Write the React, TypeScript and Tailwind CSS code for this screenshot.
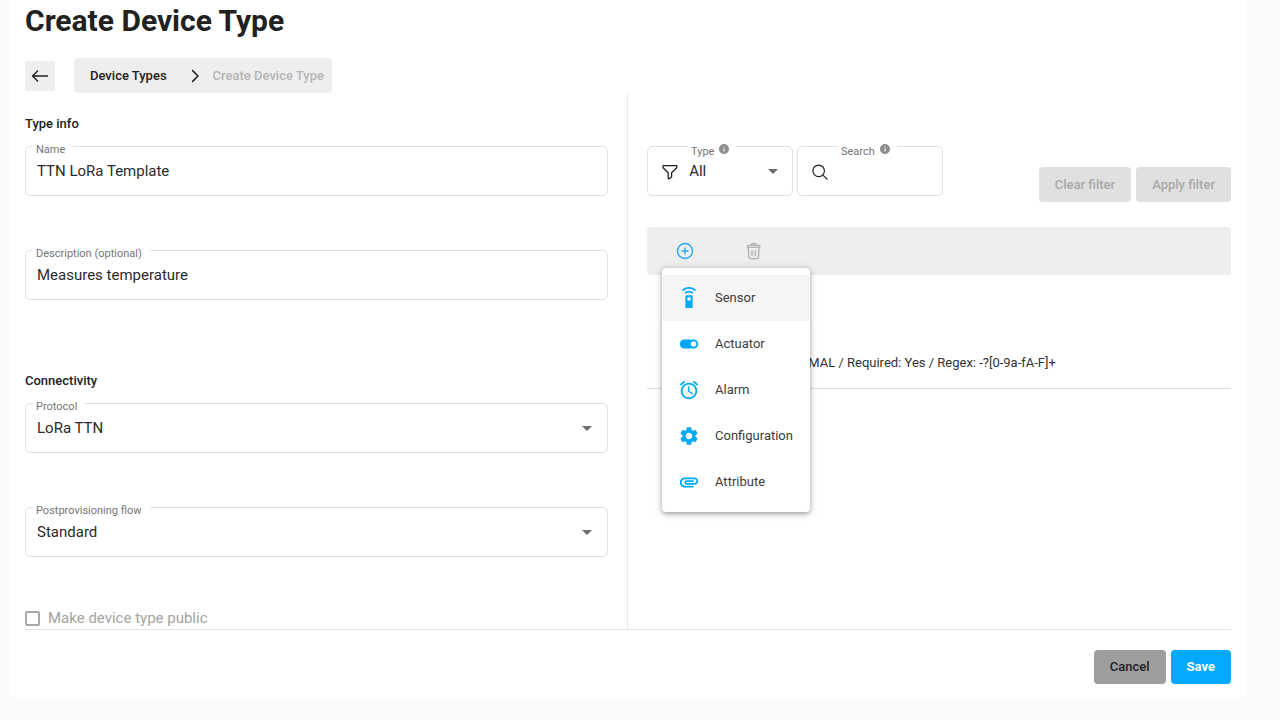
import { useState } from "react";
import type { ReactNode } from "react";
import {
  MdAlarm,
  MdArrowDropDown,
  MdAttachment,
  MdInfo,
  MdSettings,
  MdSettingsRemote,
  MdToggleOn,
} from "react-icons/md";

type FieldProps = {
  id: string;
  label: string;
  children: ReactNode;
};

const Field = ({ id, label, children }: FieldProps) => (
  <div className="relative h-[50px] rounded-[5px] border border-[#e0e0e0]">
    {children}
    <label
      htmlFor={id}
      className="absolute -top-1.5 left-1.5 bg-white pl-1 pr-2 text-[11px] leading-[18px] text-[#757575]"
    >
      {label}
    </label>
  </div>
);

type SelectFieldProps = {
  id: string;
  label: string;
  options: string[];
};

const SelectField = ({ id, label, options }: SelectFieldProps) => (
  <Field id={id} label={label}>
    <select
      id={id}
      className="h-full w-full appearance-none bg-transparent px-[11px] text-[15px] text-[#2b2b2b] outline-none"
    >
      {options.map((option) => (
        <option key={option}>{option}</option>
      ))}
    </select>
    <MdArrowDropDown
      size={24}
      className="pointer-events-none absolute right-2 top-3 text-[#6b6b6b]"
    />
  </Field>
);

type TextFieldProps = {
  id: string;
  label: string;
  value: string;
};

const TextField = ({ id, label, value }: TextFieldProps) => (
  <Field id={id} label={label}>
    <input
      id={id}
      type="text"
      defaultValue={value}
      className="h-full w-full bg-transparent px-[11px] text-[15px] text-[#2b2b2b] outline-none"
    />
  </Field>
);

type FilterFieldProps = {
  id: string;
  label: string;
  icon: ReactNode;
  children: ReactNode;
};

const FilterField = ({ id, label, icon, children }: FilterFieldProps) => (
  <div className="relative flex h-[50px] w-[146px] items-center rounded-[5px] border border-[#e0e0e0] pl-[13px]">
    {icon}
    {children}
    <label
      htmlFor={id}
      className="absolute -top-1 left-10 flex items-start gap-1 bg-white pl-[3px] pr-1.5 text-[11px] leading-[18px] text-[#757575]"
    >
      {label}
      <MdInfo size={12} className="text-[#8e8e8e]" />
    </label>
  </div>
);

const menuItems = [
  { label: "Sensor", Icon: MdSettingsRemote },
  { label: "Actuator", Icon: MdToggleOn },
  { label: "Alarm", Icon: MdAlarm },
  { label: "Configuration", Icon: MdSettings },
  { label: "Attribute", Icon: MdAttachment },
];

const AddMenu = () => (
  <ul
    role="menu"
    className="absolute left-[15px] top-[41px] z-10 w-[148px] rounded bg-white py-[7px] shadow-[0_2px_4px_rgba(0,0,0,0.28),0_1px_8px_rgba(0,0,0,0.16)]"
  >
    {menuItems.map(({ label, Icon }, index) => (
      <li key={label} role="none">
        <button
          type="button"
          role="menuitem"
          className={
            index === 0
              ? "flex h-[46px] w-full items-center gap-[15px] bg-[#f5f5f5] pl-4 text-[13px] text-[#3c3c3c]"
              : "flex h-[46px] w-full items-center gap-[15px] pl-4 text-[13px] text-[#3c3c3c]"
          }
        >
          <Icon size={22} className="shrink-0 text-[#03a9f4]" />
          {label}
        </button>
      </li>
    ))}
  </ul>
);

const FilterIcon = () => (
  <svg width="20" height="20" viewBox="0 0 20 20" fill="none" stroke="#1f1f1f" strokeWidth="1.5" strokeLinejoin="round">
    <path d="M2.4 3.8h16v2.4l-6 5.8v4.8L10 19H8.4v-7l-6-5.8z" />
  </svg>
);

const SearchIcon = () => (
  <svg width="20" height="20" viewBox="0 0 20 20" fill="none" stroke="#1f1f1f" strokeWidth="1.4" strokeLinecap="round">
    <circle cx="9" cy="9.8" r="6.8" />
    <path d="M14 14.8l4.8 4.6" />
  </svg>
);

const App = () => {
  const [isPublic, setIsPublic] = useState(false);

  return (
    <div className="min-h-screen bg-[#fafafa] font-[Roboto,sans-serif] text-[#212121]">
      <main className="ml-2.5 mr-[34px] rounded-b-lg bg-white px-[15px] pb-[15px]">
        <h1 className="text-[30px] font-bold leading-[42px]">
          Create Device Type
        </h1>

        <div className="flex items-center gap-[19px] pt-4">
          <button
            type="button"
            aria-label="Back"
            className="flex h-[30px] w-[30px] items-center justify-center rounded bg-[#eeeeee]"
          >
            <svg width="18" height="18" viewBox="0 0 18 18" fill="none" stroke="#212121" strokeWidth="1.4" strokeLinecap="round" strokeLinejoin="round">
              <path d="M16.5 9H1.5M6.6 3.9L1.5 9L6.6 14.1" />
            </svg>
          </button>
          <nav className="flex h-[35px] items-center rounded bg-[#eeeeee] pl-4 pr-2 text-[13px] font-medium">
            <a href="#device-types">Device Types</a>
            <svg className="ml-6 mr-3" width="10" height="14" viewBox="0 0 10 14" fill="none" stroke="#212121" strokeWidth="1.5" strokeLinecap="round" strokeLinejoin="round">
              <path d="M1.6 1.6L7 7L1.6 12.4" />
            </svg>
            <span className="text-[#b5b5b5]">Create Device Type</span>
          </nav>
        </div>

        <div className="grid grid-cols-2 border-b border-[#e4e4e4]">
          <section className="border-r border-[#ebebeb] pb-px pr-[19px] pt-[21px]">
            <h2 className="mb-3 text-[13px] font-medium leading-5">Type info</h2>
            <div className="flex flex-col gap-[54px]">
              <TextField id="name" label="Name" value="TTN LoRa Template" />
              <TextField
                id="description"
                label="Description (optional)"
                value="Measures temperature"
              />
            </div>

            <h2 className="mb-3 mt-[71px] text-[13px] font-medium leading-5">
              Connectivity
            </h2>
            <div className="flex flex-col gap-[54px]">
              <SelectField id="protocol" label="Protocol" options={["LoRa TTN"]} />
              <SelectField
                id="flow"
                label="Postprovisioning flow"
                options={["Standard"]}
              />
            </div>

            <label className="mt-[51px] flex h-5 items-center gap-2 text-[15px] leading-5 text-[#a3a3a3]">
              <input
                type="checkbox"
                checked={isPublic}
                onChange={(e) => setIsPublic(e.target.checked)}
                className="h-[15px] w-[15px] appearance-none rounded-[2px] border-2 border-[#a9a9a9] checked:bg-[#a9a9a9]"
              />
              Make device type public
            </label>
          </section>

          <section className="pl-[19px] pt-[53px]">
            <div className="flex items-start justify-between">
              <div className="flex gap-1">
                <FilterField id="type" label="Type" icon={<FilterIcon />}>
                  <select
                    id="type"
                    className="h-full w-full appearance-none bg-transparent pl-[11px] text-[15px] text-[#2b2b2b] outline-none"
                  >
                    <option>All</option>
                  </select>
                  <MdArrowDropDown
                    size={24}
                    className="pointer-events-none absolute right-[7px] top-3 text-[#6b6b6b]"
                  />
                </FilterField>
                <FilterField id="search" label="Search" icon={<SearchIcon />}>
                  <input
                    id="search"
                    type="text"
                    className="h-full w-full min-w-0 bg-transparent px-2 text-[15px] outline-none"
                  />
                </FilterField>
              </div>
              <div className="mt-[21px] flex gap-[5px] text-[13px] font-medium text-[#a8a8a8]">
                <button type="button" disabled className="h-[35px] rounded bg-[#e0e0e0] px-4">
                  Clear filter
                </button>
                <button type="button" disabled className="h-[35px] rounded bg-[#e0e0e0] px-4">
                  Apply filter
                </button>
              </div>
            </div>

            <div className="relative mt-[25px] flex h-12 items-center gap-[50px] rounded bg-[#eeeeee] pl-[29px]">
              <button type="button" aria-label="Add">
                <svg width="18" height="18" viewBox="0 0 18 18" fill="none" stroke="#29a9ee" strokeWidth="1.4" strokeLinecap="round">
                  <circle cx="9" cy="9" r="7.5" />
                  <path d="M9 6v6M6 9h6" />
                </svg>
              </button>
              <button type="button" aria-label="Delete" disabled>
                <svg width="18" height="18" viewBox="0 0 18 18" fill="none" stroke="#b0b0b0" strokeWidth="1.4" strokeLinecap="round" strokeLinejoin="round">
                  <path d="M3.8 3.4h11.6c.6 0 .6 2 0 2H3.8c-.6 0-.6-2 0-2zM7.6 3.2V1.6h4v1.6M4.3 5.6l.4 9.2c.1 1.2.7 1.8 1.8 1.8h6.2c1.1 0 1.7-.6 1.8-1.8l.4-9.2M8 8.8v4.8M11.2 8.8v4.8" />
                </svg>
              </button>
              <AddMenu />
            </div>

            <div className="border-b border-[#dedede] pb-[15px] pl-[135px] pt-[78px] text-[13px] leading-5 text-[#333333]">
              NORMAL / Required: Yes / Regex: -?[0-9a-fA-F]+
            </div>
          </section>
        </div>

        <div className="flex justify-end gap-[5px] pt-5 text-[13px]">
          <button type="button" className="h-[34px] rounded bg-[#9e9e9e] px-4 font-medium">
            Cancel
          </button>
          <button type="button" className="h-[34px] rounded bg-[#03a9ff] px-4 font-bold text-white">
            Save
          </button>
        </div>
      </main>
    </div>
  );
};

export default App;
